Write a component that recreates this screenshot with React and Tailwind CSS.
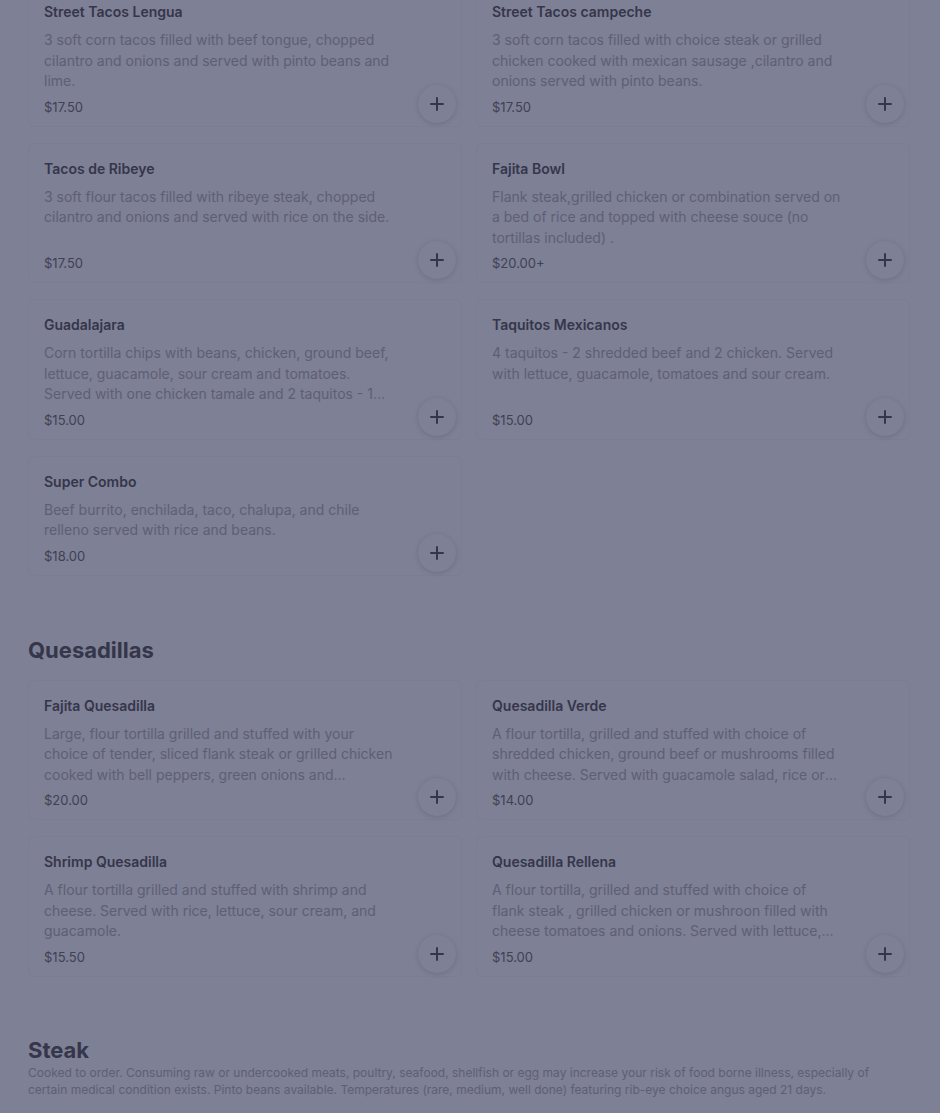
const sections = [
  {
    title: null,
    items: [
      { name: 'Street Tacos Lengua', desc: '3 soft corn tacos filled with beef tongue, chopped cilantro and onions and served with pinto beans and lime.', price: '$17.50' },
      { name: 'Street Tacos campeche', desc: '3 soft corn tacos filled with choice steak or grilled chicken cooked with mexican sausage ,cilantro and onions served with pinto beans.', price: '$17.50' },
      { name: 'Tacos de Ribeye', desc: '3 soft flour tacos filled with ribeye steak, chopped cilantro and onions and served with rice on the side.', price: '$17.50' },
      { name: 'Fajita Bowl', desc: 'Flank steak,grilled chicken or combination served on a bed of rice and topped with cheese souce (no tortillas included) .', price: '$20.00+' },
      { name: 'Guadalajara', desc: 'Corn tortilla chips with beans, chicken, ground beef, lettuce, guacamole, sour cream and tomatoes. Served with one chicken tamale and 2 taquitos - 1 beef and 1 chicken.', price: '$15.00' },
      { name: 'Taquitos Mexicanos', desc: '4 taquitos - 2 shredded beef and 2 chicken. Served with lettuce, guacamole, tomatoes and sour cream.', price: '$15.00' },
      { name: 'Super Combo', desc: 'Beef burrito, enchilada, taco, chalupa, and chile relleno served with rice and beans.', price: '$18.00' },
    ],
  },
  {
    title: 'Quesadillas',
    items: [
      { name: 'Fajita Quesadilla', desc: 'Large, flour tortilla grilled and stuffed with your choice of tender, sliced flank steak or grilled chicken cooked with bell peppers, green onions and tomatoes. Served with rice.', price: '$20.00' },
      { name: 'Quesadilla Verde', desc: 'A flour tortilla, grilled and stuffed with choice of shredded chicken, ground beef or mushrooms filled with cheese. Served with guacamole salad, rice or beans.', price: '$14.00' },
      { name: 'Shrimp Quesadilla', desc: 'A flour tortilla grilled and stuffed with shrimp and cheese. Served with rice, lettuce, sour cream, and guacamole.', price: '$15.50' },
      { name: 'Quesadilla Rellena', desc: 'A flour tortilla, grilled and stuffed with choice of flank steak , grilled chicken or mushroon filled with cheese tomatoes and onions. Served with lettuce, guacamole and sour cream.', price: '$15.00' },
    ],
  },
];

function PlusIcon() {
  return (
    <svg width="16" height="16" viewBox="0 0 16 16" fill="none">
      <path d="M8 2v12M2 8h12" stroke="#35364a" strokeWidth="2" strokeLinecap="round" />
    </svg>
  );
}

function ItemCard({ item }) {
  return (
    <div className="flex border border-[#7b7d92] rounded-md pt-[15px] pl-[15px] pr-[5px] pb-[3px]">
      <div className="flex flex-col w-[350px] pb-[7px]">
        <div className="text-[14px] leading-5 font-semibold text-[#35364a]">{item.name}</div>
        <p className="mt-2 text-[14px] leading-[20.5px] text-[#5d5f74] line-clamp-3">{item.desc}</p>
        <div className="mt-auto pt-[6px] text-[13px] leading-[18px] text-[#3f4154]">{item.price}</div>
      </div>
      <div className="flex-1 flex justify-end items-end">
        <button className="w-[38px] h-[38px] rounded-full bg-[#7e8095] shadow-[0_1px_5px_rgba(40,42,70,0.2)] flex items-center justify-center">
          <PlusIcon />
        </button>
      </div>
    </div>
  );
}

export default function App() {
  return (
    <div className="min-h-[1113px] bg-[#7e8095] overflow-hidden font-['Inter','Noto_Sans',sans-serif]">
      <div className="px-[28px]">
        <div className="grid grid-cols-[434px_434px] gap-x-[14px] gap-y-4 mt-[-14px]">
          {sections[0].items.map(it => <ItemCard key={it.name} item={it} />)}
        </div>

        <h2 className="mt-[60px] text-[22px] leading-[28px] font-bold text-[#35364a]">Quesadillas</h2>
        <div className="grid grid-cols-[434px_434px] gap-x-[14px] gap-y-4 mt-4">
          {sections[1].items.map(it => <ItemCard key={it.name} item={it} />)}
        </div>

        <h2 className="mt-[59px] text-[22px] leading-[28px] font-bold text-[#35364a]">Steak</h2>
        <p className="text-[12px] leading-[17px] text-[#5d5f74] max-w-[860px]">
          Cooked to order. Consuming raw or undercooked meats, poultry, seafood, shellfish or egg may increase your risk of food borne illness, especially of certain medical condition exists. Pinto beans available. Temperatures (rare, medium, well done) featuring rib-eye choice angus aged 21 days.
        </p>
      </div>
    </div>
  );
}
